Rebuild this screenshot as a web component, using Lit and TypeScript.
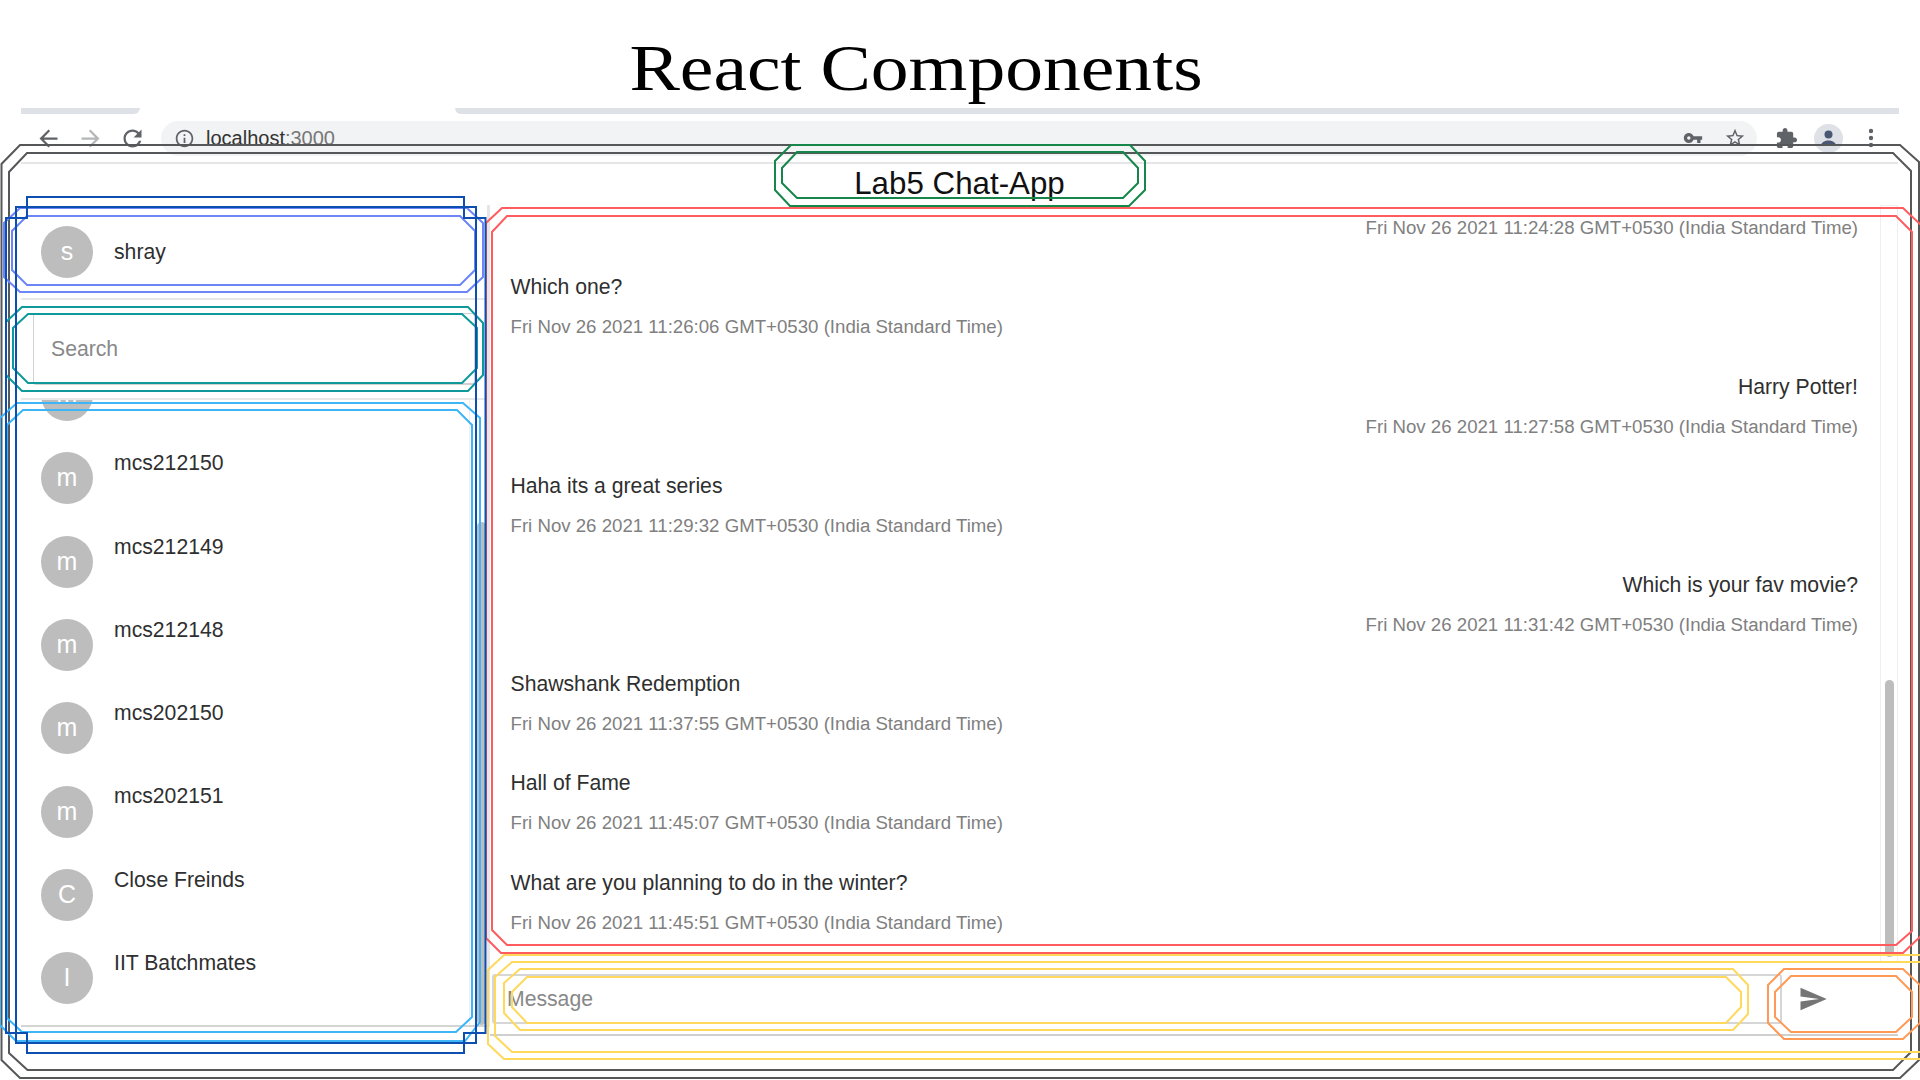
import { css, html, LitElement, svg, TemplateResult } from "lit"
import { customElement } from "lit/decorators.js"

interface Contact {
    initial: string
    name: string
}

interface Message {
    text: string
    time: string
    mine: boolean
}

interface Outline {
    color: string
    points: string
}

const TZ = "GMT+0530 (India Standard Time)"

// the first row is scrolled away under the search box, only its avatar peeks out
const CONTACTS: Contact[] = [
    { initial: "m", name: "" },
    { initial: "m", name: "mcs212150" },
    { initial: "m", name: "mcs212149" },
    { initial: "m", name: "mcs212148" },
    { initial: "m", name: "mcs202150" },
    { initial: "m", name: "mcs202151" },
    { initial: "C", name: "Close Freinds" },
    { initial: "I", name: "IIT Batchmates" },
]

const MESSAGES: Message[] = [
    { text: "", time: "11:24:28", mine: true },
    { text: "Which one?", time: "11:26:06", mine: false },
    { text: "Harry Potter!", time: "11:27:58", mine: true },
    { text: "Haha its a great series", time: "11:29:32", mine: false },
    { text: "Which is your fav movie?", time: "11:31:42", mine: true },
    { text: "Shawshank Redemption", time: "11:37:55", mine: false },
    { text: "Hall of Fame", time: "11:45:07", mine: false },
    { text: "What are you planning to do in the winter?", time: "11:45:51", mine: false },
]

const DARK = "#555759"
const GREEN = "#17864a"
const RED = "#ff5c60"
const YELLOW = "#ffd95c"
const ORANGE = "#ff9a56"
const BLUE = "#0d4fb0"
const PERI = "#6c85f7"
const TEAL = "#10999b"
const SKY = "#3db5f7"

// the annotation outlines drawn over the screenshot, in page coordinates
const OUTLINES: Outline[] = [
    { color: DARK, points: "20,145 1900,145 1919,162 1919,1060 1900,1078 20,1078 1.5,1060 1.5,164" },
    { color: DARK, points: "27,153 1893,153 1911,171 1911,1052 1893,1070 27.5,1070 9,1053 9,172" },
    { color: GREEN, points: "791,145 1130,145 1145,161 1145,190 1129,206 790,206 775,190 775,161" },
    { color: GREEN, points: "797,152 1123,152 1138,168 1138,183 1123,198 797,198 782,183 782,168" },
    { color: RED, points: "502,208 1903,208 1922,226 1922,935 1903,953 501,953 486,938 486,223" },
    { color: RED, points: "507,216 1896,216 1912,232 1912,931 1896,945 507,945 492,930 492,232" },
    { color: YELLOW, points: "504,955 1930,955 1930,1059 504,1059 488,1044 488,970" },
    { color: YELLOW, points: "512,962 1930,962 1930,1052 512,1052 495,1036 495,977" },
    { color: YELLOW, points: "520,969 1733,969 1748,985 1748,1014 1733,1030 520,1030 504,1013 504,983" },
    { color: YELLOW, points: "527,977 1726,977 1741,992 1741,1007 1726,1023 527,1023 512,1007 512,992" },
    { color: ORANGE, points: "1784,969 1903,969 1920,985 1920,1023 1903,1039 1784,1039 1768,1023 1768,985" },
    { color: ORANGE, points: "1791,976 1896,976 1912,992 1912,1017 1896,1032 1791,1032 1775,1017 1775,992" },
    { color: PERI, points: "20,208 467,208 483,223 483,277 467,292 20,292 4,277 4,223" },
    { color: PERI, points: "27,216 460,216 475,231 475,270 460,285 27,285 12,270 12,231" },
    { color: TEAL, points: "22,307 468,307 483,323 483,375 468,391 22,391 6,375 6,322" },
    { color: TEAL, points: "28,314 462,314 477,328 477,368 462,383 28,383 13,368 13,328" },
    { color: SKY, points: "17,403 463,403 480,418 480,1022 465,1041 16,1041 0,1025 0,418" },
    { color: SKY, points: "23,410 457,410 472,425 472,1017 456,1032 22,1032 7,1018 7,425" },
    { color: BLUE, points: "27,197 464,197 464,218 485.5,218 485.5,1033 464,1033 464,1053 27,1053 27,1033 6,1033 6,218 27,218" },
    { color: BLUE, points: "16,207 476,207 476,1043 16,1043" },
]

const ICONS = {
    back: "M20 11H7.83l5.59-5.59L12 4l-8 8 8 8 1.41-1.41L7.83 13H20v-2z",
    forward: "M12 4l-1.41 1.41L16.17 11H4v2h12.17l-5.58 5.59L12 20l8-8z",
    reload: "M17.65 6.35C16.2 4.9 14.21 4 12 4c-4.42 0-7.99 3.58-7.99 8s3.57 8 7.99 8c3.73 0 6.84-2.55 7.73-6h-2.08c-.82 2.33-3.04 4-5.65 4-3.31 0-6-2.69-6-6s2.69-6 6-6c1.66 0 3.14.69 4.22 1.78L13 11h7V4l-2.35 2.35z",
    info: "M11 7h2v2h-2zm0 4h2v6h-2zm1-9C6.48 2 2 6.48 2 12s4.48 10 10 10 10-4.48 10-10S17.52 2 12 2zm0 18c-4.41 0-8-3.59-8-8s3.59-8 8-8 8 3.59 8 8-3.59 8-8 8z",
    key: "M12.65 10C11.83 7.67 9.61 6 7 6c-3.31 0-6 2.69-6 6s2.69 6 6 6c2.61 0 4.83-1.67 5.65-4H17v4h4v-4h2v-4H12.65zM7 14c-1.1 0-2-.9-2-2s.9-2 2-2 2 .9 2 2-.9 2-2 2z",
    star: "M22 9.24l-7.19-.62L12 2 9.19 8.63 2 9.24l5.46 4.73L5.82 21 12 17.27 18.18 21l-1.63-7.03L22 9.24zM12 15.4l-3.76 2.27 1-4.28-3.32-2.88 4.38-.38L12 6.1l1.71 4.04 4.38.38-3.32 2.88 1 4.28L12 15.4z",
    puzzle: "M20.5 11H19V7c0-1.1-.9-2-2-2h-4V3.5C13 2.12 11.88 1 10.5 1S8 2.12 8 3.5V5H4c-1.1 0-1.99.9-1.99 2v3.8H3.5c1.49 0 2.7 1.21 2.7 2.7s-1.21 2.7-2.7 2.7H2V20c0 1.1.9 2 2 2h3.8v-1.5c0-1.49 1.21-2.7 2.7-2.7 1.49 0 2.7 1.21 2.7 2.7V22H17c1.1 0 2-.9 2-2v-4h1.5c1.38 0 2.5-1.12 2.5-2.5S21.88 11 20.5 11z",
    send: "M2.01 21L23 12 2.01 3 2 10l15 2-15 2z",
}

@customElement("app-root")
export class AppRoot extends LitElement {
    static styles = css`
        :host {
            display: flex;
            flex-direction: column;
            position: relative;
            width: 1920px;
            height: 1080px;
            overflow: hidden;
            background: #fff;
            font-family: "Liberation Sans", Arial, sans-serif;
            color: #2f2f2f;
        }

        .slide-title {
            height: 108px;
            flex: none;
            margin: 0;
            box-sizing: border-box;
            padding: 32px 88px 0 0;
            text-align: center;
            font-family: "Liberation Serif", serif;
            font-weight: 400;
            font-size: 65px;
            line-height: 72px;
            color: #000;
            /* the slide face is a wide Baskerville, stretch the serif to its width */
            transform: scaleX(1.163);
            transform-origin: 916px 50%;
        }

        .tabs {
            display: flex;
            flex: none;
            height: 6px;
            margin: 0 21px;
        }

        .tab {
            width: 119px;
            background: #dee1e6;
            border-radius: 0 0 8px 0;
        }

        .tab-rest {
            flex: 1;
            margin-left: 315px;
            background: #dee1e6;
            border-radius: 0 0 0 8px;
        }

        .toolbar {
            display: flex;
            align-items: center;
            flex: none;
            height: 48px;
            padding-left: 35px;
        }

        .toolbar svg {
            display: block;
            flex: none;
        }

        .nav {
            fill: #5f6368;
        }

        .nav-off {
            fill: #b4b6b9;
            margin-left: 15px;
        }

        .nav-reload {
            margin-left: 15px;
        }

        .address {
            display: flex;
            align-items: center;
            width: 1596px;
            height: 35px;
            margin-left: 15px;
            padding-left: 13px;
            box-sizing: border-box;
            border-radius: 18px;
            background: #f1f3f4;
            font-size: 20px;
        }

        .host {
            margin-left: 11px;
            padding-top: 1px;
            color: #333;
        }

        .port {
            color: #777;
        }

        .key {
            margin-left: auto;
            fill: #5f6368;
        }

        .star {
            margin-left: 21px;
            margin-right: 11px;
            fill: #5f6368;
        }

        .puzzle {
            margin-left: 18px;
            fill: #5f6368;
        }

        .profile {
            margin-left: 16px;
        }

        .dots {
            margin-left: 25px;
        }

        .app {
            flex: 1;
            display: flex;
            flex-direction: column;
            min-height: 0;
        }

        .app-title {
            flex: none;
            height: 43px;
            margin: 0 22px 0 21px;
            border-top: 2px solid #e6e6e6;
            box-sizing: border-box;
            text-align: center;
            font-size: 31.3px;
            font-weight: 400;
            line-height: 40px;
            color: #111;
        }

        .columns {
            display: flex;
            margin: 0 22px 0 21px;
            height: 832px;
        }

        .sidebar {
            flex: none;
            width: 469px;
            height: 822px;
            box-sizing: border-box;
            display: flex;
            flex-direction: column;
            border-right: 3px solid #e6e6e6;
        }

        .me {
            display: flex;
            align-items: center;
            gap: 21px;
            flex: none;
            height: 95px;
            box-sizing: border-box;
            padding-left: 20px;
            border-bottom: 2px solid #e8e8e8;
            font-size: 21.2px;
        }

        .avatar {
            flex: none;
            width: 52px;
            height: 52px;
            border-radius: 50%;
            background: #bdbdbd;
            color: #fff;
            font-size: 25px;
            line-height: 51px;
            text-align: center;
        }

        .search {
            flex: none;
            padding: 13px 12px;
            border-bottom: 2px solid #e8e8e8;
        }

        .search-field {
            height: 72px;
            box-sizing: border-box;
            padding: 0 0 0 17px;
            border: 1px solid #d2d2d2;
            border-bottom-width: 2px;
            border-radius: 3px;
            font-size: 21.2px;
            line-height: 70px;
            color: #888;
        }

        .list {
            flex: 1;
            min-height: 0;
            display: flex;
            border-bottom: 2px solid #d4d4d4;
        }

        .contacts {
            flex: 1;
            min-width: 0;
            overflow: hidden;
        }

        .contact-stack {
            margin-top: -46.5px;
        }

        .contact {
            display: flex;
            align-items: center;
            gap: 21px;
            height: 83.3px;
            padding-left: 20px;
            font-size: 21.2px;
        }

        .contact-name {
            align-self: flex-start;
            padding-top: 14.5px;
            line-height: 24px;
        }

        .track {
            flex: none;
            display: flex;
            flex-direction: column;
            box-sizing: border-box;
            width: 18px;
            border-left: 1px solid #efefef;
        }

        .track-list {
            padding-top: 122px;
            padding-left: 7px;
        }

        .track-chat {
            padding-top: 474px;
            padding-left: 4px;
            padding-bottom: 4px;
            border-right: 1px solid #efefef;
            border-top: 1px solid #efefef;
        }

        .thumb {
            flex: 1;
            width: 9px;
            border-radius: 5px;
            background: #bdbdbd;
        }

        .chat {
            flex: 1;
            min-width: 0;
            display: flex;
            flex-direction: column;
        }

        .thread {
            flex: none;
            height: 756px;
            display: flex;
        }

        .messages {
            flex: 1;
            min-width: 0;
            overflow: hidden;
        }

        .message-stack {
            margin-top: -46.3px;
        }

        .message {
            padding: 17.6px 22px 17.6px 20.5px;
            height: 99.2px;
            box-sizing: border-box;
            line-height: 24px;
            font-size: 21.2px;
        }

        .message.mine {
            text-align: right;
        }

        .message-text {
            min-height: 24px;
        }

        .time {
            margin-top: 16px;
            font-size: 18.65px;
            color: #808080;
        }

        .composer {
            flex: none;
            display: flex;
            height: 75px;
            box-sizing: border-box;
            padding: 13px 0 11px 2px;
            border-bottom: 2px solid #cfcfcf;
        }

        .message-field {
            flex: none;
            width: 1290px;
            height: 50px;
            box-sizing: border-box;
            padding-left: 13px;
            border: 2px solid #d6d6d6;
            border-radius: 3px;
            font-size: 21.2px;
            line-height: 46px;
            color: #888;
        }

        .send {
            display: block;
            flex: none;
            margin: 10px 0 0 16px;
            fill: #757575;
        }

        .outlines {
            position: absolute;
            left: 0;
            top: 0;
            fill: none;
            stroke-width: 2;
            pointer-events: none;
        }
    `

    icon(path: string, size: number, cls: string): TemplateResult {
        return html`<svg class=${cls} width=${size} height=${size} viewBox="0 0 24 24">
            <path d=${path}></path>
        </svg>`
    }

    renderToolbar(): TemplateResult {
        return html`<div class="tabs">
                <div class="tab"></div>
                <div class="tab-rest"></div>
            </div>
            <div class="toolbar">
                ${this.icon(ICONS.back, 27, "nav")}
                ${this.icon(ICONS.forward, 27, "nav-off")}
                ${this.icon(ICONS.reload, 27, "nav nav-reload")}
                <div class="address">
                    ${this.icon(ICONS.info, 21, "nav")}
                    <span class="host">localhost<span class="port">:3000</span></span>
                    ${this.icon(ICONS.key, 20, "key")}
                    ${this.icon(ICONS.star, 22, "star")}
                </div>
                ${this.icon(ICONS.puzzle, 23, "puzzle")}
                <svg class="profile" width="29" height="29" viewBox="0 0 29 29">
                    <circle cx="14.5" cy="14.5" r="14.5" fill="#dee1e6"></circle>
                    <circle cx="14.5" cy="10.5" r="4" fill="#4a5874"></circle>
                    <path d="M6.5 22c1-4 4.5-5.500 8-5.500s7 1.500 8 5.500z" fill="#4a5874"></path>
                </svg>
                <svg class="dots" width="6" height="22" viewBox="0 0 6 22" fill="#5f6368">
                    <circle cx="3" cy="4" r="2.200"></circle>
                    <circle cx="3" cy="11" r="2.200"></circle>
                    <circle cx="3" cy="18" r="2.200"></circle>
                </svg>
            </div>`
    }

    renderSidebar(): TemplateResult {
        return html`<aside class="sidebar">
            <div class="me">
                <div class="avatar">s</div>
                <span>shray</span>
            </div>
            <div class="search">
                <div class="search-field">Search</div>
            </div>
            <div class="list">
                <div class="contacts">
                    <div class="contact-stack">
                        ${CONTACTS.map(
                            (c) => html`<div class="contact">
                                <div class="avatar">${c.initial}</div>
                                <div class="contact-name">${c.name}</div>
                            </div>`,
                        )}
                    </div>
                </div>
                <div class="track track-list"><div class="thumb"></div></div>
            </div>
        </aside>`
    }

    renderChat(): TemplateResult {
        return html`<section class="chat">
            <div class="thread">
                <div class="messages">
                    <div class="message-stack">
                        ${MESSAGES.map(
                            (m) => html`<div class="message ${m.mine ? "mine" : ""}">
                                <div class="message-text">${m.text}</div>
                                <div class="time">Fri Nov 26 2021 ${m.time} ${TZ}</div>
                            </div>`,
                        )}
                    </div>
                </div>
                <div class="track track-chat"><div class="thumb"></div></div>
            </div>
            <div class="composer">
                <div class="message-field">Message</div>
                ${this.icon(ICONS.send, 30, "send")}
            </div>
        </section>`
    }

    render(): TemplateResult {
        return html`<h1 class="slide-title">React Components</h1>
            ${this.renderToolbar()}
            <main class="app">
                <h2 class="app-title">Lab5 Chat-App</h2>
                <div class="columns">${this.renderSidebar()} ${this.renderChat()}</div>
            </main>
            <svg class="outlines" width="1920" height="1080" viewBox="0 0 1920 1080">
                ${OUTLINES.map(
                    (o) => svg`<polygon points=${o.points} stroke=${o.color}></polygon>`,
                )}
            </svg>`
    }
}
